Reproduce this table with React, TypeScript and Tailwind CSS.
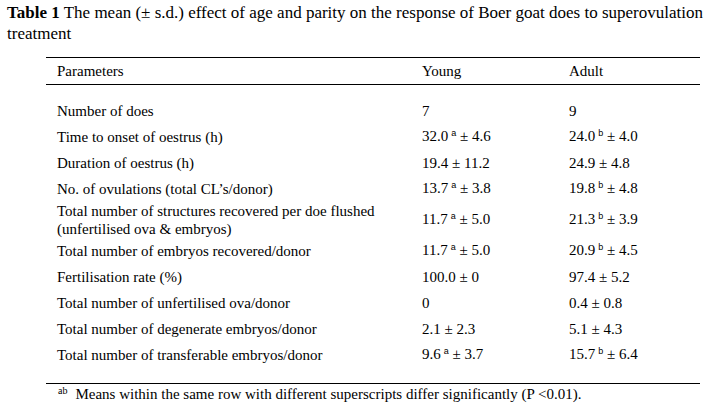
import React from "react";

type Row = { label: React.ReactNode; young: React.ReactNode; adult: React.ReactNode; h: number };

const Sup = ({ c }: { c: string }) => (
  <span className="relative top-[-5px] ml-[3px] text-[9px] font-['Liberation_Sans',sans-serif]">{c}</span>
);

const rows: Row[] = [
  { label: "Number of does", young: "7", adult: "9", h: 26 },
  { label: "Time to onset of oestrus (h)", young: <>32.0<Sup c="a" /> ± 4.6</>, adult: <>24.0<Sup c="b" /> ± 4.0</>, h: 26 },
  { label: "Duration of oestrus (h)", young: "19.4 ± 11.2", adult: "24.9 ± 4.8", h: 26 },
  { label: "No. of ovulations (total CL’s/donor)", young: <>13.7<Sup c="a" /> ± 3.8</>, adult: <>19.8<Sup c="b" /> ± 4.8</>, h: 26 },
  {
    label: (
      <>
        Total number of structures recovered per doe flushed
        <br />
        (unfertilised ova &amp; embryos)
      </>
    ),
    young: <>11.7<Sup c="a" /> ± 5.0</>,
    adult: <>21.3<Sup c="b" /> ± 3.9</>,
    h: 36,
  },
  { label: "Total number of embryos recovered/donor", young: <>11.7<Sup c="a" /> ± 5.0</>, adult: <>20.9<Sup c="b" /> ± 4.5</>, h: 26 },
  { label: "Fertilisation rate (%)", young: "100.0 ± 0", adult: "97.4 ± 5.2", h: 26 },
  { label: "Total number of unfertilised ova/donor", young: "0", adult: "0.4 ± 0.8", h: 26 },
  { label: "Total number of degenerate embryos/donor", young: "2.1 ± 2.3", adult: "5.1 ± 4.3", h: 26 },
  { label: "Total number of transferable embryos/donor", young: <>9.6<Sup c="a" /> ± 3.7</>, adult: <>15.7<Sup c="b" /> ± 6.4</>, h: 26 },
];

export default function App() {
  return (
    <div className="w-[704px] h-[404px] overflow-hidden bg-white text-black font-['Liberation_Serif',serif] text-[15px]">
      <div className="pt-[2px] pl-[7px] text-[17px] leading-[21px] whitespace-nowrap">
        <b>Table 1</b> The mean (± s.d.) effect of age and parity on the response of Boer goat does to superovulation
        <br />
        treatment
      </div>
      <div className="ml-[46px] w-[654px] mt-[13px]">
        <div className="border-t border-black" />
        <div className="h-[26px] flex items-center leading-[17px]">
          <div className="w-[376px] pl-[11px]">Parameters</div>
          <div className="w-[147px]">Young</div>
          <div>Adult</div>
        </div>
        <div className="border-t border-black" />
        <div className="h-[13px]" />
        {rows.map((r, i) => (
          <div key={i} className="flex items-center leading-[18px]" style={{ height: r.h }}>
            <div className="w-[376px] pl-[11px]">{r.label}</div>
            <div className="w-[147px]">{r.young}</div>
            <div>{r.adult}</div>
          </div>
        ))}
        <div className="h-[15px]" />
        <div className="border-t border-black" />
        <div className="pl-[12px] pt-[1px] leading-[18px]">
          <span className="relative top-[-5px] text-[10px]">ab</span>
          <span className="ml-[8px]">Means within the same row with different superscripts differ significantly (P &lt;0.01).</span>
        </div>
      </div>
    </div>
  );
}
